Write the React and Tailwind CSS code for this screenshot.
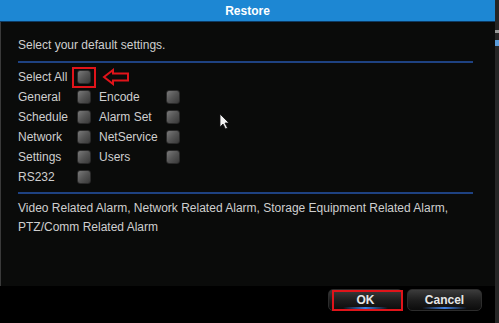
import React from 'react';

const font = { fontFamily: '"Liberation Sans", Arial, sans-serif' };

function Box() {
  return (
    <span className="block h-[14px] w-[14px] rounded-[3px] border border-[#2a2a2a] bg-gradient-to-br from-[#7a7a7a] via-[#555] to-[#3a3a3a]" />
  );
}

function Row({ left, right }) {
  return (
    <div className="flex h-[20px] items-center">
      <span className="w-[59px]">{left}</span>
      <Box />
      {right && (
        <>
          <span className="ml-[8px] w-[67px]">{right}</span>
          <Box />
        </>
      )}
    </div>
  );
}

function Btn({ label, highlight }) {
  return (
    <button className="relative flex h-[22px] w-[75px] items-center justify-center rounded-[5px] border border-[#2c2c2c] bg-gradient-to-b from-[#3c3c3c] via-[#1e1e1e] to-[#0c0c0c] text-[12px] font-bold text-[#e6e6e6]">
      {label}
      <span className="absolute bottom-[1px] left-[14px] right-[14px] h-[2px] rounded-full bg-gradient-to-r from-transparent via-[#3f7fe0] to-transparent" />
      {highlight && <span className="absolute -bottom-[1px] left-[3px] -right-[1px] top-0 border-2 border-[#e0141a]" />}
    </button>
  );
}

export default function App() {
  return (
    <div className="flex h-[323px] w-[499px] overflow-hidden bg-black text-[12px] text-[#cfcfcf]" style={font}>
      <div className="flex w-[495px] flex-col">
        <div className="flex h-[22px] items-center justify-center border-b border-[#0d3a63] bg-[#1d87d3] text-[12px] font-bold text-white">
          Restore
        </div>
        <div className="relative flex-1 border-l border-[#3a3a3a] bg-[#0a0b0a] pl-[17px] pr-[22px] pt-[15px]">
          <div className="h-[16px] leading-[16px]">Select your default settings.</div>
          <div className="mt-[8px] h-[2px] bg-[#1e4282]" />
          <div className="mt-[4px]">
            <div className="flex h-[20px] items-center">
              <span className="w-[59px]">Select All</span>
              <span className="relative">
                <Box />
                <span className="absolute -left-[5px] -right-[5px] -top-[3px] -bottom-[4px] border-2 border-[#e0141a]" />
              </span>
              <svg className="ml-[11px]" width="28" height="18" viewBox="0 0 28 18">
                <path d="M2 9 L11 2 L11 5.5 L26 5.5 L26 12.5 L11 12.5 L11 16 Z" fill="none" stroke="#e0141a" strokeWidth="2" strokeLinejoin="miter" />
              </svg>
            </div>
            <Row left="General" right="Encode" />
            <Row left="Schedule" right="Alarm Set" />
            <Row left="Network" right="NetService" />
            <Row left="Settings" right="Users" />
            <Row left="RS232" />
          </div>
          <div className="mt-[5px] h-[2px] bg-[#1e4282]" />
          <div className="mt-[5px] leading-[19px]">
            Video Related Alarm, Network Related Alarm, Storage Equipment Related Alarm,
            <br />
            PTZ/Comm Related Alarm
          </div>
          <svg className="absolute left-[218px] top-[91px]" width="12" height="17" viewBox="0 0 12 17">
            <path d="M1 1 L1 14 L4 11 L6.5 16 L8.5 15 L6 10 L10 10 Z" fill="#f2f2f2" stroke="#111" strokeWidth="0.8" />
          </svg>
        </div>
        <div className="flex h-[37px] items-start justify-end gap-[4px] bg-black pr-[13px] pt-[3px]">
          <Btn label="OK" highlight />
          <Btn label="Cancel" />
        </div>
      </div>
      <div className="flex w-[4px] flex-col bg-[#262626]">
        <div className="mt-[30px] h-[3px] bg-[#9a9a9a]" />
        <div className="mt-[7px] h-[6px] bg-[#5a9ad8]" />
      </div>
    </div>
  );
}
